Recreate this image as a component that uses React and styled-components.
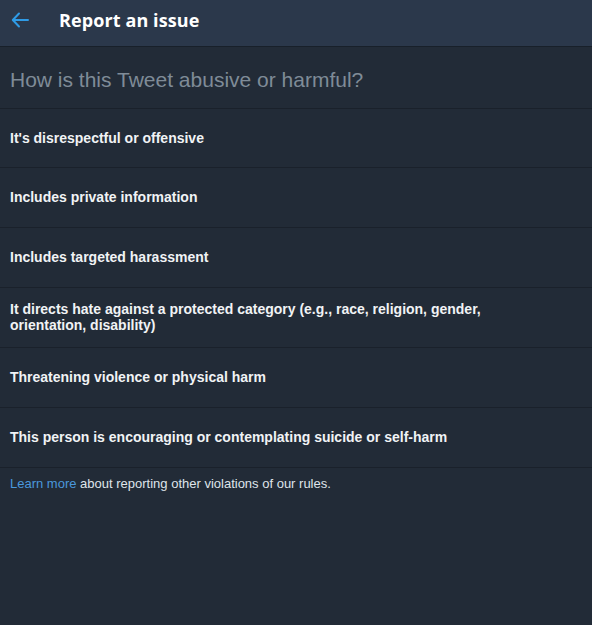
import React from "react";
import styled, { createGlobalStyle } from "styled-components";

const Global = createGlobalStyle`
  html, body { margin: 0; padding: 0; background: #222b37; }
  body { font-family: "Liberation Sans", Arial, sans-serif; }
  #root { min-height: 625px; background: #222b37; }
`;

const Page = styled.div`
  width: 592px;
  min-height: 625px;
  background: #222b37;
  display: flex;
  flex-direction: column;
`;

const Header = styled.header`
  height: 46px;
  background: #2b384b;
  border-bottom: 1px solid #18202a;
  display: flex;
  align-items: center;
  box-sizing: content-box;
`;

const BackButton = styled.button`
  width: 40px;
  height: 40px;
  background: none;
  border: 0;
  padding: 0 0 0 11px;
  display: flex;
  align-items: center;
  cursor: pointer;
  margin-top: -7px;
`;

const Title = styled.h1`
  margin: -6px 0 0 19px;
  font-family: "Open Sans", "DejaVu Sans", sans-serif;
  font-weight: 700;
  font-size: 18px;
  color: #ffffff;
  letter-spacing: 0.1px;
`;

const Question = styled.h2`
  margin: 0;
  box-sizing: content-box;
  height: 56px;
  display: flex;
  align-items: center;
  padding: 5px 10px 0;
  font-weight: 400;
  font-size: 21px;
  color: #7f8b97;
  border-bottom: 1px solid #1a212b;
`;

const List = styled.ul`
  list-style: none;
  margin: 0;
  padding: 0;
`;

const Item = styled.li`
  box-sizing: content-box;
  height: 58px;
  display: flex;
  align-items: center;
  padding: 0 10px 1px;
  border-bottom: 1px solid #1a212b;
  font-weight: 700;
  font-size: 14px;
  line-height: 16px;
  color: #f1f3f5;
  cursor: pointer;

  &:first-child {
    height: 57px;
  }
`;

const ItemText = styled.span`
  max-width: 500px;
`;

const Footer = styled.p`
  margin: 0;
  padding: 8px 10px;
  font-size: 13px;
  line-height: 16px;
  color: #dfe4ea;
`;

const Link = styled.a`
  color: #4a98dc;
  text-decoration: none;
`;

const items = [
  "It's disrespectful or offensive",
  "Includes private information",
  "Includes targeted harassment",
  "It directs hate against a protected category (e.g., race, religion, gender, orientation, disability)",
  "Threatening violence or physical harm",
  "This person is encouraging or contemplating suicide or self-harm",
];

export default function App() {
  return (
    <Page>
      <Global />
      <Header>
        <BackButton aria-label="Back">
          <svg width="18" height="16" viewBox="0 0 18 16" fill="none">
            <path d="M8 1.5L1.8 8L8 14.5M2 8H17" stroke="#2f9be6" strokeWidth="2" strokeLinecap="round" strokeLinejoin="round" />
          </svg>
        </BackButton>
        <Title>Report an issue</Title>
      </Header>
      <Question>How is this Tweet abusive or harmful?</Question>
      <List>
        {items.map((t) => (
          <Item key={t}>
            <ItemText>{t}</ItemText>
          </Item>
        ))}
      </List>
      <Footer>
        <Link href="#">Learn more</Link> about reporting other violations of our rules.
      </Footer>
    </Page>
  );
}
